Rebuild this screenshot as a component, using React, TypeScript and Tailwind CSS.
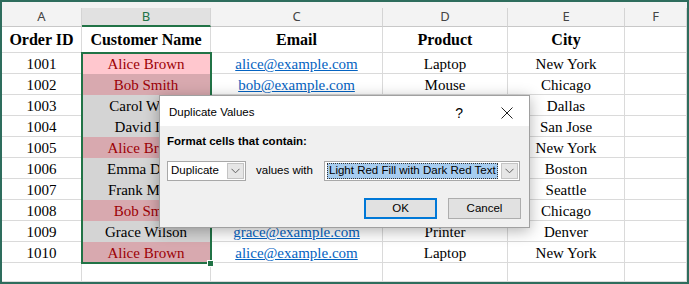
import React from 'react';

const widths = ['w-[80px]', 'w-[129px]', 'w-[172px]', 'w-[125px]', 'w-[117px]', 'w-[62px]'];
const letters = ['A', 'B', 'C', 'D', 'E', 'F'];

type Row = {
  id: string;
  name: string;
  email: string;
  product: string;
  city: string;
  dup: boolean;
};

const rows: Row[] = [
  { id: '1001', name: 'Alice Brown', email: 'alice@example.com', product: 'Laptop', city: 'New York', dup: true },
  { id: '1002', name: 'Bob Smith', email: 'bob@example.com', product: 'Mouse', city: 'Chicago', dup: true },
  { id: '1003', name: 'Carol White', email: 'carol@example.com', product: 'Keyboard', city: 'Dallas', dup: false },
  { id: '1004', name: 'David Lee', email: 'david@example.com', product: 'Monitor', city: 'San Jose', dup: false },
  { id: '1005', name: 'Alice Brown', email: 'alice@example.com', product: 'Laptop', city: 'New York', dup: true },
  { id: '1006', name: 'Emma Davis', email: 'emma@example.com', product: 'Tablet', city: 'Boston', dup: false },
  { id: '1007', name: 'Frank Miller', email: 'frank@example.com', product: 'Headset', city: 'Seattle', dup: false },
  { id: '1008', name: 'Bob Smith', email: 'bob@example.com', product: 'Mouse', city: 'Chicago', dup: true },
  { id: '1009', name: 'Grace Wilson', email: 'grace@example.com', product: 'Printer', city: 'Denver', dup: false },
  { id: '1010', name: 'Alice Brown', email: 'alice@example.com', product: 'Laptop', city: 'New York', dup: true },
];

const serif = "font-['Liberation_Serif','Times_New_Roman',serif]";
const ui = "font-['Liberation_Sans','Arial',sans-serif]";

const Chevron = () => (
  <svg width="9" height="6" viewBox="0 0 9 6" fill="none">
    <path d="M0.5 0.8 L4.5 4.8 L8.5 0.8" stroke="#606060" strokeWidth="1" />
  </svg>
);

const Cell: React.FC<{ col: number; className?: string; children?: React.ReactNode }> = ({ col, className = '', children }) => (
  <div className={`${widths[col]} shrink-0 flex items-center justify-center border-r border-b border-[#dadada] ${className}`}>
    {children}
  </div>
);

export default function App() {
  return (
    <div className="relative w-[689px] h-[284px] border-2 border-[#2e6d5d] bg-white overflow-hidden">
      {/* top strip */}
      <div className="h-[6px] bg-[#f3f3f3]" />

      {/* column letters */}
      <div className="flex h-[19px] bg-[#f3f3f3] font-['Noto_Sans','Open_Sans',sans-serif] text-[13px] text-[#444]">
        {letters.map((l, i) => (
          <div
            key={l}
            className={`${widths[i]} shrink-0 flex items-center justify-center border-r border-[#d4d4d4] ${
              i === 1 ? 'bg-[#e1e1e1] text-[#217346] border-b-2 border-b-[#217346]' : 'border-b border-b-[#c8c8c8]'
            }`}
          >
            {l}
          </div>
        ))}
      </div>

      {/* title row */}
      <div className={`flex h-[26px] ${serif} text-[16px] font-bold text-black`}>
        <Cell col={0}>Order ID</Cell>
        <Cell col={1}>Customer Name</Cell>
        <Cell col={2}>Email</Cell>
        <Cell col={3}>Product</Cell>
        <Cell col={4}>City</Cell>
        <Cell col={5} />
      </div>

      {/* data rows */}
      {rows.map((r, i) => {
        const nameCls = r.dup
          ? i === 0
            ? 'bg-[#ffc7ce] text-[#9c0006] border-b-transparent'
            : 'bg-[#d8a9af] text-[#9c0006] border-b-transparent'
          : 'bg-[#d4d4d4] text-black border-b-transparent';
        return (
          <div key={r.id} className={`flex h-[21px] ${serif} text-[15px] text-black`}>
            <Cell col={0} className="pt-[3px]">{r.id}</Cell>
            <Cell col={1} className={`pt-[3px] ${nameCls}`}>{r.name}</Cell>
            <Cell col={2} className="pt-[3px]">
              <span className="text-[#0563c1] underline underline-offset-1">{r.email}</span>
            </Cell>
            <Cell col={3} className="pt-[3px]">{r.product}</Cell>
            <Cell col={4} className="pt-[3px]">{r.city}</Cell>
            <Cell col={5} />
          </div>
        );
      })}

      {/* empty row */}
      <div className="flex h-[19px]">
        {widths.map((_, i) => (
          <Cell key={i} col={i} />
        ))}
      </div>

      {/* selection */}
      <div className="absolute left-[79px] top-[50px] w-[131px] h-[212px] border-2 border-[#217346] pointer-events-none" />
      <div className="absolute left-[205px] top-[258px] w-[7px] h-[7px] bg-[#217346] border border-white" />

      {/* dialog */}
      <div className={`absolute left-[157px] top-[93px] w-[371px] h-[133px] border border-[#a0a0a0] bg-[#f0f0f0] shadow-[0_3px_14px_rgba(0,0,0,0.3)] ${ui} text-[11.5px] text-black whitespace-nowrap`}>
        <div className="h-[30px] bg-white flex items-center pl-[9px] pr-[12px] pt-[4px]">
          <span className="flex-1">Duplicate Values</span>
          <span className="text-[14px] mr-[38px]">?</span>
          <svg width="12" height="12" viewBox="0 0 12 12" className="mr-[4px]">
            <path d="M0.5 0.5 L11.5 11.5 M11.5 0.5 L0.5 11.5" stroke="#222" strokeWidth="1" />
          </svg>
        </div>
        <div className="px-[7px] pt-[7px]">
          <div className="font-bold h-[18px] flex items-center">Format cells that contain:</div>
          <div className="flex items-center mt-[10px] h-[20px]">
            <div className="w-[79px] h-[20px] bg-white border border-[#a8a8a8] flex items-center pl-[3px] pr-[1px]">
              <span className="flex-1">Duplicate</span>
              <div className="w-[17px] h-[16px] bg-[#e6e6e6] border border-[#c4c4c4] flex items-center justify-center">
                <Chevron />
              </div>
            </div>
            <span className="ml-[10px] w-[68px]">values with</span>
            <div className="w-[196px] h-[20px] bg-white border border-[#a8a8a8] flex items-center pl-[2px] pr-[1px]">
              <div className="flex-1 h-[16px] bg-[#a7cdf0] border border-dotted border-[#333] flex items-center pl-[1px] mr-[3px]">
                Light Red Fill with Dark Red Text
              </div>
              <div className="w-[17px] h-[16px] bg-[#e6e6e6] border border-[#c4c4c4] flex items-center justify-center">
                <Chevron />
              </div>
            </div>
          </div>
          <div className="flex justify-end mt-[17px] pr-[1px] gap-[11px]">
            <button className="w-[73px] h-[21px] bg-[#e1e1e1] border-2 border-[#0078d7] flex items-center justify-center">
              OK
            </button>
            <button className="w-[73px] h-[21px] bg-[#e1e1e1] border border-[#adadad] flex items-center justify-center">
              Cancel
            </button>
          </div>
        </div>
      </div>
    </div>
  );
}
